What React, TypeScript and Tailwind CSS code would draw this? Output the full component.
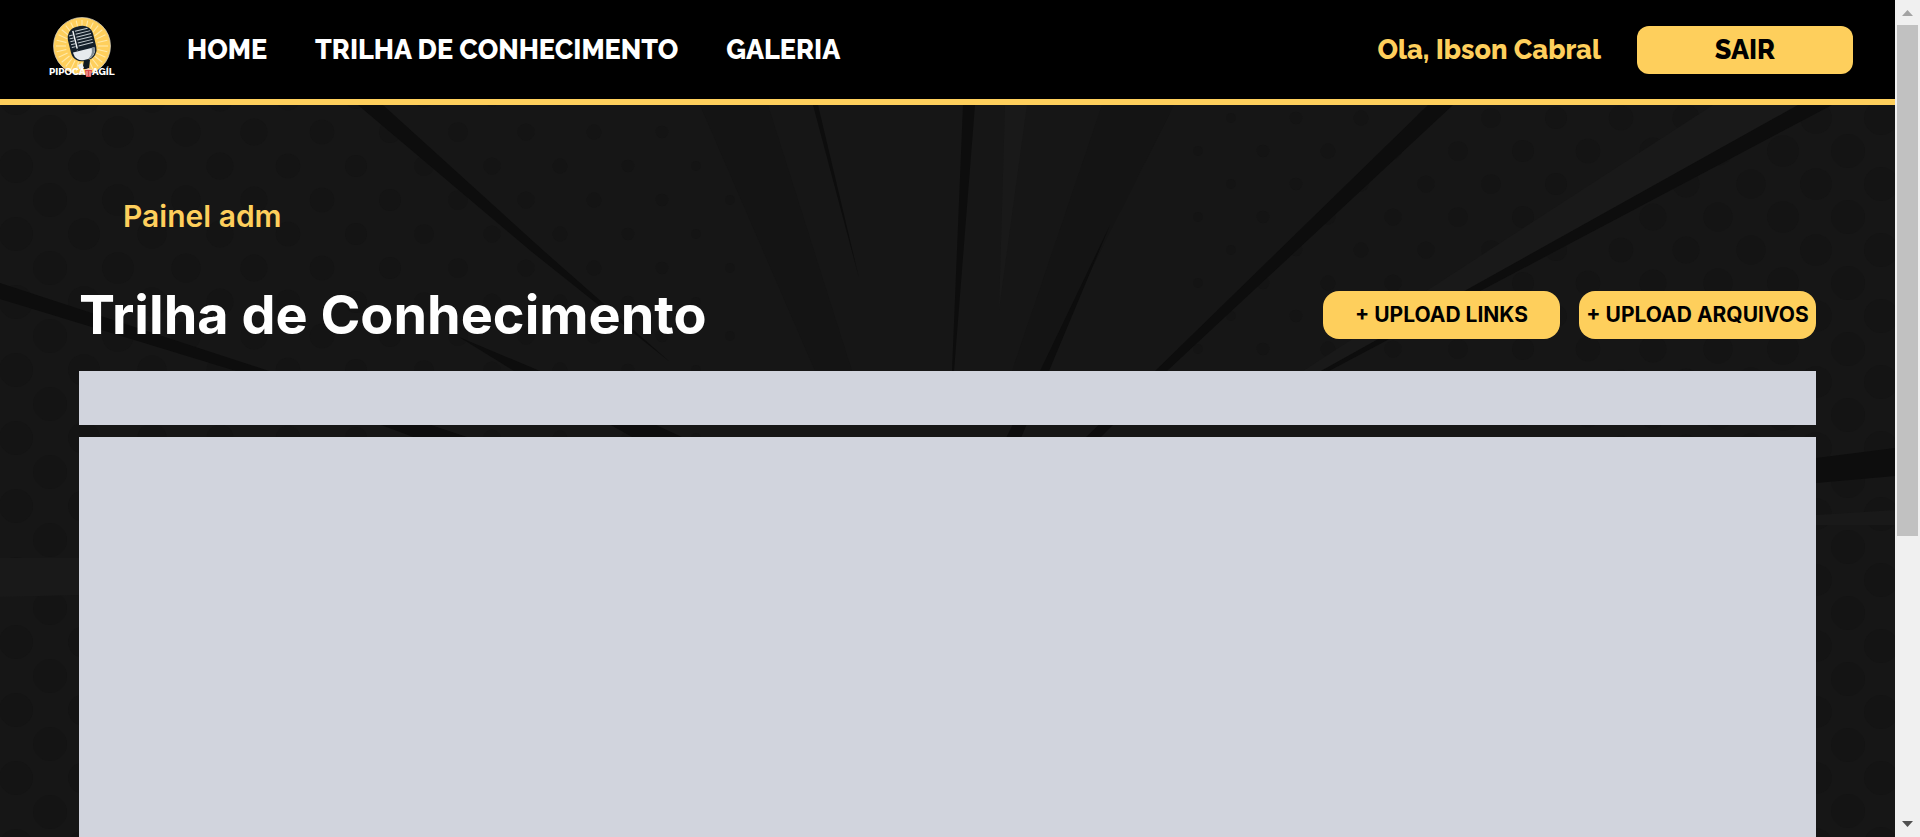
import React from "react";

const navLinks = ["HOME", "TRILHA DE CONHECIMENTO", "GALERIA"];

type Dot = { x: number; y: number; r: number };

function buildDots(): Dot[] {
  const dots: Dot[] = [];
  for (let row = 0; row < 24; row++) {
    const shift = row % 2 === 0 ? 0 : 1;
    for (let col = 0; col < 11; col++) {
      const r = 17 - col * 1.2;
      dots.push({ x: 50 + col * 68 + shift * 34 - 34, y: 98 + row * 34, r });
      dots.push({ x: 1881 - col * 65 - shift * 33, y: 118 + row * 33, r });
    }
  }
  return dots;
}

const dots = buildDots();

function Backdrop() {
  return (
    <svg
      aria-hidden="true"
      className="absolute inset-0 h-full w-full"
      viewBox="0 105 1895 732"
      preserveAspectRatio="none"
    >
      <rect y="105" width="1895" height="732" fill="#161616" />
      <g fill="#141414">
        {dots.map((d, i) => (
          <circle key={i} cx={d.x} cy={d.y} r={d.r} />
        ))}
      </g>
      <g fill="#191919">
        <path d="M1005 105H1027L999 310Z" />
        <path d="M1713 105H1798L1321 371H1303Z" />
        <path d="M1816 515L1895 510V525H1816Z" />
        <path d="M0 558H79V595L0 597Z" />
      </g>
      <g fill="#141414">
        <path d="M700 105H768L852 371H815Z" />
        <path d="M1102 105H1174L1040 371H1012Z" />
      </g>
      <g fill="#0d0d0d">
        <path d="M358 105H383L545 252L670 362L532 252Z" />
        <path d="M0 283L269 371L470 438H416L236 371L0 299Z" />
        <path d="M459 337L540 371L684 438H634L514 371Z" />
        <path d="M813 105H818L859 278Z" />
        <path d="M963 105H975L954 371H952Z" />
        <path d="M1110 225L1049 371L1021 438H1006L1040 371Z" />
        <path d="M1428 105H1453L1167 371L1100 438H1085L1155 371Z" />
        <path d="M1798 105H1832L1329 371H1321Z" />
        <path d="M1816 458L1895 448V476L1816 483Z" />
      </g>
    </svg>
  );
}

function Logo() {
  const rays = Array.from({ length: 28 }, (_, i) => (i * 360) / 28);
  return (
    <svg className="h-16 w-[68px]" viewBox="48 14 68 64" role="img" aria-label="Pipoca Ágil">
      <circle cx="82" cy="46" r="28.5" fill="#fecf5c" stroke="#d9d4c4" strokeWidth="0.7" />
      <g stroke="#ffe9a8" strokeWidth="1.1">
        {rays.map((a) => (
          <line key={a} x1="82" y1="30" x2="82" y2="20" transform={`rotate(${a} 82 46)`} />
        ))}
      </g>
      <path d="M83 66l1-6h6l-1 9h-6z" fill="#111a20" />
      <path d="M78 65l4-2 2 5-5 1z" fill="#eef2f4" />
      <g transform="rotate(-14 82 43)">
        <rect x="69" y="26" width="26" height="35" rx="11" fill="#14202a" />
        <path d="M71 50h22v1a9 9 0 0 1-9 9h-4a9 9 0 0 1-9-9z" fill="#e6ebee" />
        <path d="M84 60c6-1 9-5 9-10h-3c0 5-2 8-6 10z" fill="#7e8b94" />
        <g stroke="#c3ccd0" strokeWidth="1">
          <path d="M78 30h13M78 33h15M78 36h15M78 39h15M78 42h15M78 45h15" />
          <path d="M71 33h4M71 36h4M71 39h4M71 42h4M71 45h4" />
        </g>
        <path d="M76 29v20" stroke="#f3f6f7" strokeWidth="1.4" />
        <path d="M70 48h24" stroke="#14202a" strokeWidth="1.5" />
      </g>
      <text x="49" y="74.500" fontFamily="Raleway, Inter, sans-serif" fontWeight="800" fontSize="10" fill="#fff">
        PIPOCA
      </text>
      <text x="92" y="74.500" fontFamily="Raleway, Inter, sans-serif" fontWeight="800" fontSize="10" fill="#fff">
        AGÍL
      </text>
      <path d="M85 70h7l-1 7h-5z" fill="#d94a4a" />
      <path d="M87 71v5M90 71v5" stroke="#ffd7d2" strokeWidth="0.8" />
      <path d="M85 70q1-2 2-1 1-2 3 0 2-1 2 1z" fill="#f4c9b8" />
    </svg>
  );
}

function Header() {
  return (
    <header className="flex h-[105px] shrink-0 items-center border-b-6 border-[#fecf5c] bg-black pr-[42px] pl-12 font-[Raleway,Lato,sans-serif] text-[27px] leading-8 font-extrabold">
      <a href="#inicio" className="-mt-2">
        <Logo />
      </a>
      <nav className="ml-[71px] flex gap-12 text-white">
        {navLinks.map((label) => (
          <a key={label} href="#" className="whitespace-nowrap">
            {label}
          </a>
        ))}
      </nav>
      <div className="ml-auto flex items-center gap-9">
        <span className="whitespace-nowrap text-[#fecf5c]">Ola, Ibson Cabral</span>
        <button type="button" className="h-12 w-[216px] rounded-xl bg-[#fecf5c] text-black">
          SAIR
        </button>
      </div>
    </header>
  );
}

function UploadButton({ children }: { children: React.ReactNode }) {
  return (
    <button
      type="button"
      className="h-12 w-[237px] rounded-2xl bg-[#fecf5c] text-[21px] font-bold whitespace-nowrap text-black"
    >
      {children}
    </button>
  );
}

function ScrollRail() {
  return (
    <div aria-hidden="true" className="flex w-[25px] shrink-0 flex-col items-center bg-[#f0f0f0]">
      <svg className="h-[25px] w-[25px] shrink-0" viewBox="0 0 25 25">
        <path d="M7 16L12.500 10L18 16Z" fill="#a3a3a3" />
      </svg>
      <div className="h-[61%] w-[21px] bg-[#c1c1c1]" />
      <svg className="mt-auto h-[25px] w-[25px] shrink-0" viewBox="0 0 25 25">
        <path d="M7 9L12.500 15L18 9Z" fill="#505050" />
      </svg>
    </div>
  );
}

export default function App() {
  return (
    <div className="flex h-screen overflow-hidden bg-black font-[Inter,sans-serif]">
      <div className="flex min-w-0 flex-1 flex-col">
        <Header />
        <main className="relative flex-1 overflow-hidden">
          <Backdrop />
          <div className="relative flex h-full flex-col px-[79px] pt-[89px]">
            <p className="pl-11 text-[30px] leading-[44px] font-semibold text-[#fecf5c]">Painel adm</p>
            <div className="mt-[46px] flex items-center justify-between">
              <h1 className="text-[54px] leading-[62px] font-bold whitespace-nowrap text-white">
                Trilha de Conhecimento
              </h1>
              <div className="flex gap-[19px]">
                <UploadButton>+ UPLOAD LINKS</UploadButton>
                <UploadButton>+ UPLOAD ARQUIVOS</UploadButton>
              </div>
            </div>
            <section aria-label="Filtros" className="mt-[25px] h-[54px] shrink-0 bg-[#d1d4dd]" />
            <section aria-label="Conteúdos" className="mt-3 flex-1 bg-[#d1d4dd]" />
          </div>
        </main>
      </div>
      <ScrollRail />
    </div>
  );
}
